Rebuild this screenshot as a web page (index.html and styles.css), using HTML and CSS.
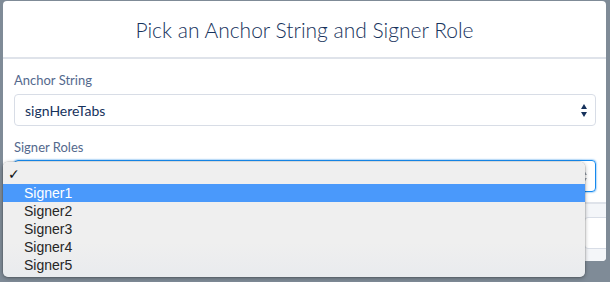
FILE: index.html
```html
<!DOCTYPE html>
<html>
<head>
<meta charset="utf-8">
<link rel="stylesheet" href="styles.css">
</head>
<body>
<div class="modal">
  <div class="modal-header">
    <h2 class="title">Pick an Anchor String and Signer Role</h2>
  </div>
  <div class="modal-body">
    <label class="label">Anchor String</label>
    <div class="select">
      <span class="select-value">signHereTabs</span>
      <span class="arrows"><span class="up"></span><span class="down"></span></span>
    </div>
    <label class="label label-2">Signer Roles</label>
    <div class="select select-focus">
      <span class="select-value"></span>
      <span class="arrows"><span class="up"></span><span class="down"></span></span>
    </div>
  </div>
  <div class="modal-footer">
    <div class="btn"></div>
  </div>
</div>
<div class="menu">
  <div class="opt opt-check"><span class="check">✓</span></div>
  <div class="opt opt-sel">Signer1</div>
  <div class="opt">Signer2</div>
  <div class="opt">Signer3</div>
  <div class="opt">Signer4</div>
  <div class="opt">Signer5</div>
</div>
</body>
</html>
```
FILE: styles.css
```css
html, body {
  margin: 0;
  padding: 0;
}
body {
  width: 610px;
  height: 282px;
  overflow: hidden;
  background: #7f8b97;
  position: relative;
  font-family: "Lato", "Open Sans", sans-serif;
}
.modal {
  margin: 1px 4px 0 3px;
  width: 603px;
  height: 260px;
  background: #ffffff;
  border-radius: 4px;
  overflow: hidden;
  display: flex;
  flex-direction: column;
}
.modal-header {
  height: 56px;
  border-bottom: 2px solid #dfe3ea;
  display: flex;
  align-items: center;
  justify-content: center;
}
.title {
  margin: 0;
  font-weight: 300;
  font-size: 21px;
  color: #16325c;
  padding-top: 1px;
}
.modal-body {
  box-sizing: border-box;
  padding: 12px 10px 0 11px;
  height: 143px;
  display: flex;
  flex-direction: column;
}
.label {
  font-size: 13px;
  color: #54698d;
  line-height: 18px;
  margin-bottom: 5px;
}
.label-2 {
  margin-top: 12px;
  margin-bottom: 4px;
}
.select {
  height: 30px;
  flex: none;
  border: 1px solid #d8dde6;
  border-radius: 4px;
  display: flex;
  align-items: center;
  justify-content: space-between;
  padding: 0 8px 0 10px;
}
.select-focus {
  border-color: #1589ee;
  box-shadow: 0 0 2px #1589ee;
}
.select-value {
  font-size: 14px;
  color: #16325c;
}
.arrows {
  display: flex;
  flex-direction: column;
  gap: 3px;
}
.up {
  width: 0; height: 0;
  border-left: 3px solid transparent;
  border-right: 3px solid transparent;
  border-bottom: 5px solid #16325c;
}
.down {
  width: 0; height: 0;
  border-left: 3px solid transparent;
  border-right: 3px solid transparent;
  border-top: 5px solid #16325c;
}
.select-focus .up { border-bottom-color: #9aa3ad; }
.select-focus .down { border-top-color: #9aa3ad; }
.modal-footer {
  flex: 1;
  background: #f4f6f9;
  border-top: 2px solid #dfe3ea;
  display: flex;
  justify-content: flex-end;
  align-items: flex-start;
  padding-top: 13px;
}
.btn {
  width: 40px;
  height: 30px;
  margin-right: -20px;
  background: #fff;
  border: 1px solid #d8dde6;
  border-radius: 4px;
}
.menu {
  position: absolute;
  left: 3px;
  top: 162px;
  width: 582px;
  height: 115px;
  box-sizing: border-box;
  padding-top: 3px;
  background: linear-gradient(#efefef 0%, #efefef 70%, #e9ebee 100%);
  border-radius: 5px;
  box-shadow: 0 1px 4px rgba(0,0,0,0.35), 0 0 0 0.5px rgba(0,0,0,0.15);
  font-family: "Liberation Sans", "Helvetica", sans-serif;
  font-size: 14px;
  color: #262626;
}
.opt {
  height: 18px;
  line-height: 18px;
  padding-left: 21px;
}
.opt-check {
  padding-left: 5px;
  height: 19px;
  line-height: 19px;
}
.check {
  font-family: "DejaVu Sans", sans-serif;
  font-size: 14px;
  font-weight: bold;
  color: #111;
}
.opt-sel {
  background: #4a99fb;
  color: #ffffff;
}
```
